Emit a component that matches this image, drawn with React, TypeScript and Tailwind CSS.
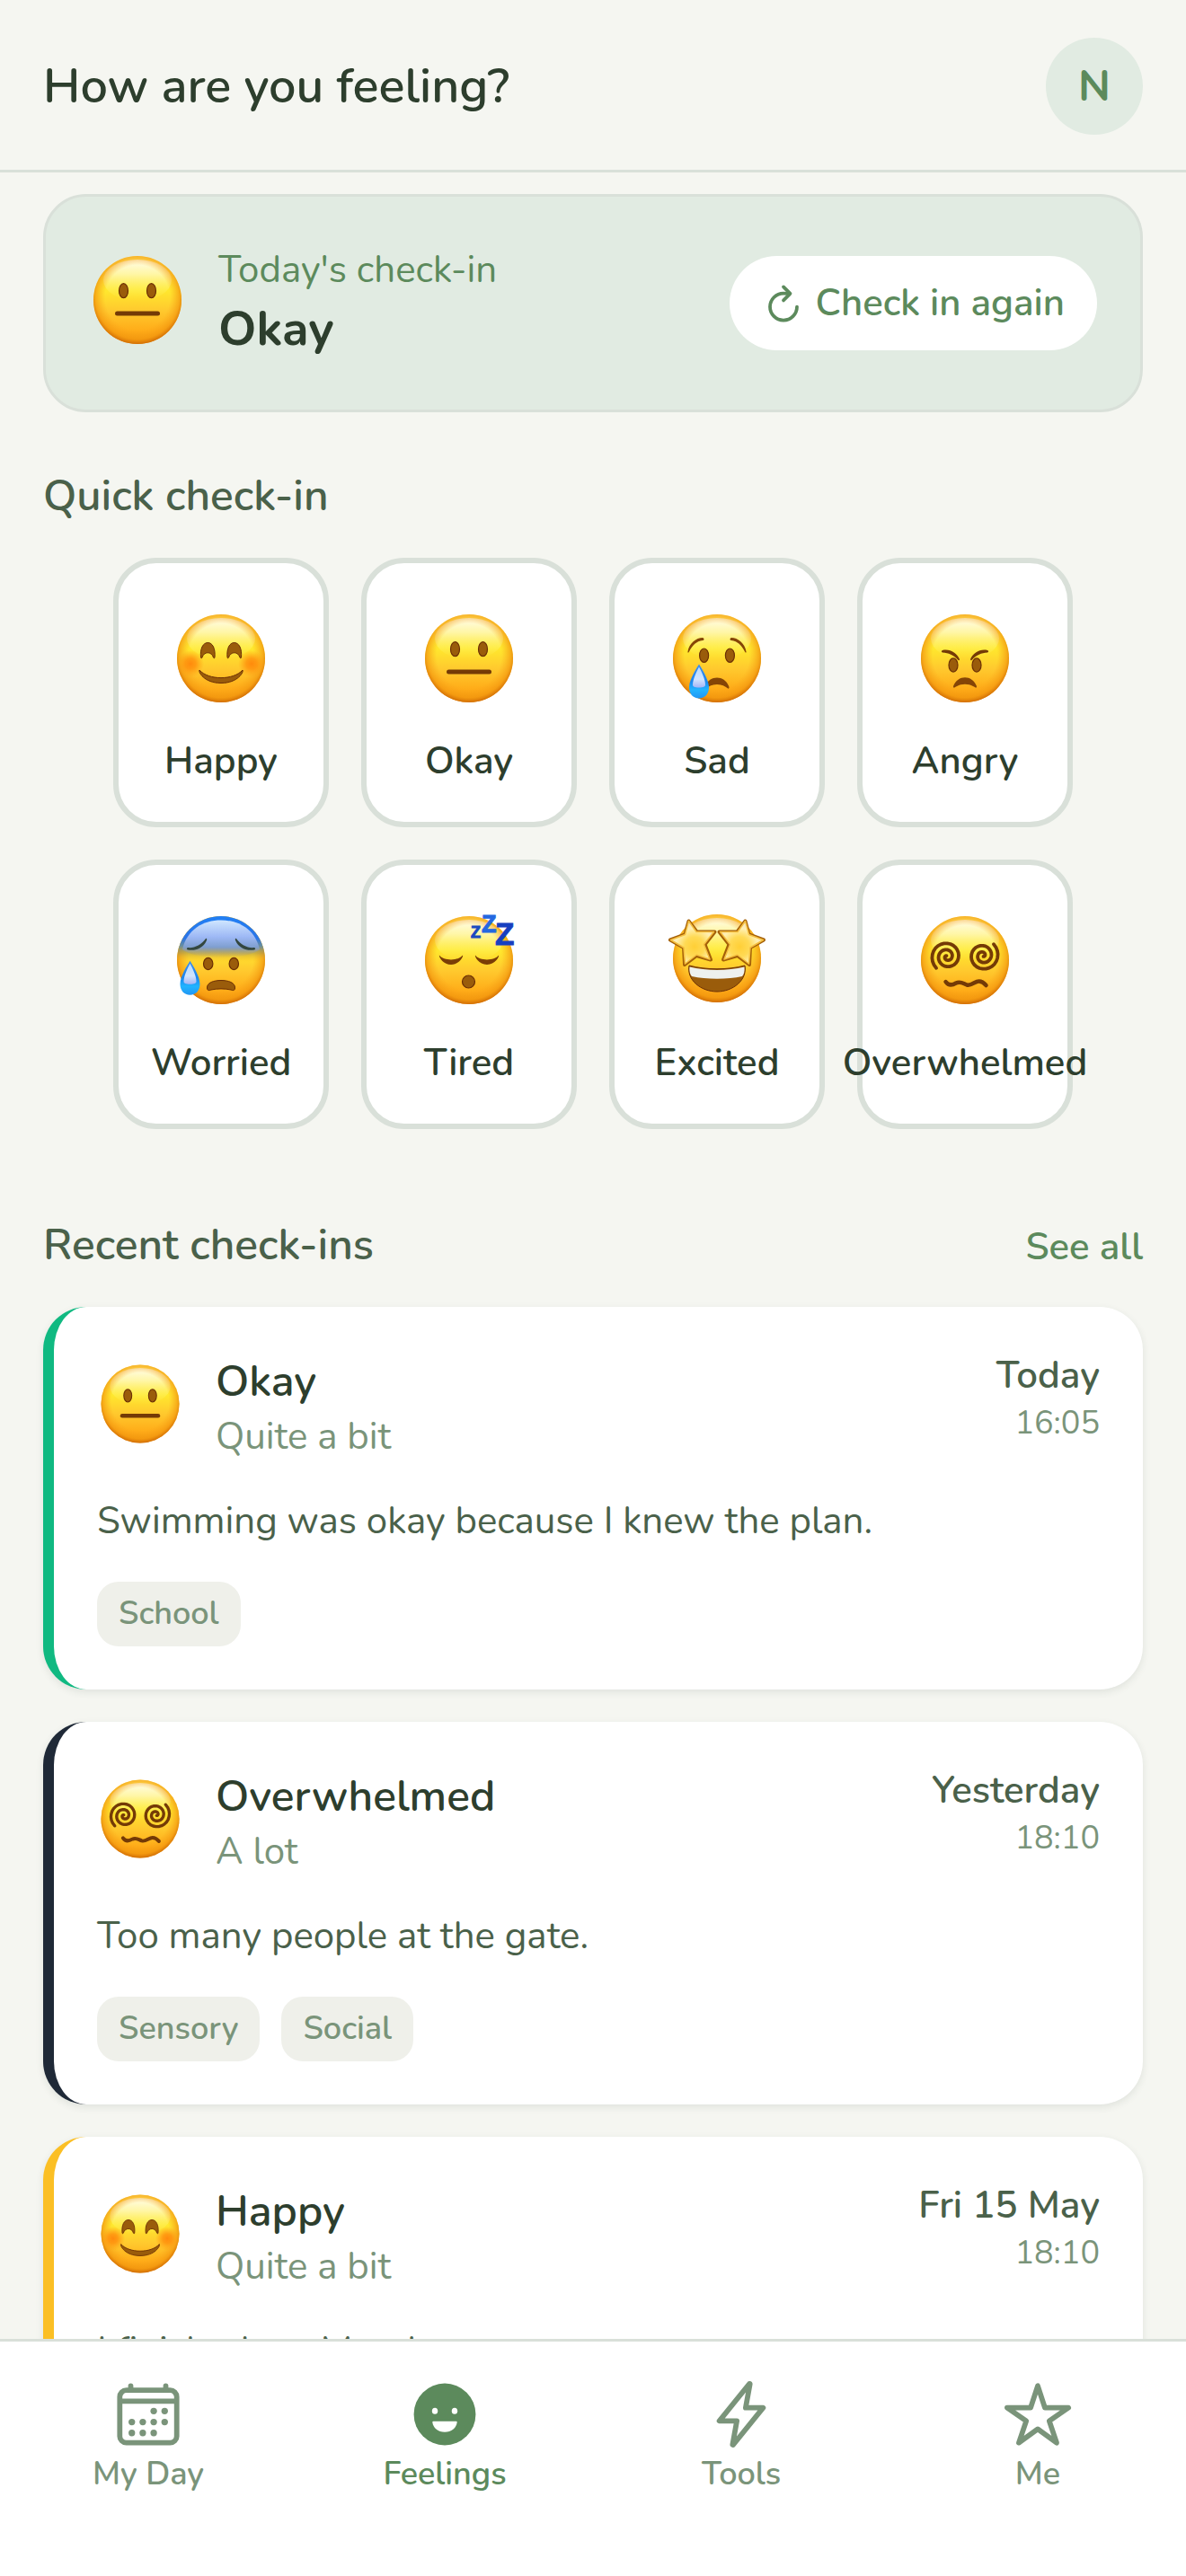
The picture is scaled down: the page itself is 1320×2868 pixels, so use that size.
import { IoCalendarOutline, IoFlashOutline, IoRefreshOutline, IoStarOutline } from "react-icons/io5";

type Mood = "happy" | "okay" | "sad" | "angry" | "worried" | "tired" | "excited" | "overwhelmed";

interface CheckIn {
  id: number;
  mood: Mood;
  label: string;
  intensity: string;
  day: string;
  time: string;
  note: string;
  tags: string[];
  accent: string;
}

const quickMoods: { mood: Mood; label: string }[] = [
  { mood: "happy", label: "Happy" },
  { mood: "okay", label: "Okay" },
  { mood: "sad", label: "Sad" },
  { mood: "angry", label: "Angry" },
  { mood: "worried", label: "Worried" },
  { mood: "tired", label: "Tired" },
  { mood: "excited", label: "Excited" },
  { mood: "overwhelmed", label: "Overwhelmed" },
];

const checkIns: CheckIn[] = [
  {
    id: 1,
    mood: "okay",
    label: "Okay",
    intensity: "Quite a bit",
    day: "Today",
    time: "16:05",
    note: "Swimming was okay because I knew the plan.",
    tags: ["School"],
    accent: "border-l-[#10b981]",
  },
  {
    id: 2,
    mood: "overwhelmed",
    label: "Overwhelmed",
    intensity: "A lot",
    day: "Yesterday",
    time: "18:10",
    note: "Too many people at the gate.",
    tags: ["Sensory", "Social"],
    accent: "border-l-[#1f2937]",
  },
  {
    id: 3,
    mood: "happy",
    label: "Happy",
    intensity: "Quite a bit",
    day: "Fri 15 May",
    time: "18:10",
    note: "I finished my Mural.",
    tags: ["School"],
    accent: "border-l-[#fbbf24]",
  },
];

const DARK = "#6b2f05";
const BROWN = "#9a5c0b";

// archimedean spiral from the centre out to the end angle, in degrees
function spiral(cx: number, cy: number, endAngle: number) {
  const turns = 2.3;
  const steps = 60;
  const points: string[] = [];
  for (let i = 0; i <= steps; i++) {
    const t = i / steps;
    const r = 1 + 16.5 * t;
    const a = ((endAngle + (1 - t) * turns * 360) * Math.PI) / 180;
    points.push(`${(cx + r * Math.cos(a)).toFixed(1)} ${(cy + r * Math.sin(a)).toFixed(1)}`);
  }
  return "M" + points.join("L");
}

const leftSpiral = spiral(-20, -4, 133);
const rightSpiral = spiral(20, -5, -47);

function FaceDefs() {
  return (
    <svg width="0" height="0" className="absolute" aria-hidden="true">
      <defs>
        <linearGradient id="skin" x1="0" y1="0" x2="0" y2="1">
          <stop offset="0" stopColor="#ffe45c" />
          <stop offset="0.38" stopColor="#ffe92e" />
          <stop offset="0.62" stopColor="#ffc92e" />
          <stop offset="0.85" stopColor="#ffac18" />
          <stop offset="1" stopColor="#f0930a" />
        </linearGradient>
        <radialGradient id="rim" cx="0.5" cy="0.47" r="0.54">
          <stop offset="0.68" stopColor="#f9a31a" stopOpacity="0" />
          <stop offset="0.88" stopColor="#f3980f" stopOpacity="0.7" />
          <stop offset="1" stopColor="#c96303" />
        </radialGradient>
        <linearGradient id="shine" x1="0" y1="0" x2="0" y2="1">
          <stop offset="0" stopColor="#fffdea" />
          <stop offset="0.35" stopColor="#fff9b8" stopOpacity="0.85" />
          <stop offset="1" stopColor="#fff04a" stopOpacity="0" />
        </linearGradient>
        <radialGradient id="blush">
          <stop offset="0" stopColor="#ff8a0c" />
          <stop offset="0.4" stopColor="#ff8f0c" stopOpacity="0.8" />
          <stop offset="1" stopColor="#ff9c12" stopOpacity="0" />
        </radialGradient>
        <linearGradient id="cold" x1="0" y1="0" x2="0" y2="1">
          <stop offset="0" stopColor="#2180f5" />
          <stop offset="0.25" stopColor="#2a74e8" />
          <stop offset="0.34" stopColor="#6b8f9c" />
          <stop offset="0.42" stopColor="#a8924c" stopOpacity="0.6" />
          <stop offset="0.52" stopColor="#ffae18" stopOpacity="0" />
        </linearGradient>
        <linearGradient id="coldShine" x1="0" y1="0" x2="0" y2="1">
          <stop offset="0" stopColor="#cfe6ff" />
          <stop offset="0.45" stopColor="#9db8f5" />
          <stop offset="0.72" stopColor="#7f9fd0" />
          <stop offset="1" stopColor="#c09c50" stopOpacity="0" />
        </linearGradient>
        <linearGradient id="tear" x1="0" y1="0" x2="0" y2="1">
          <stop offset="0" stopColor="#3b8df0" />
          <stop offset="0.5" stopColor="#1d86ee" />
          <stop offset="0.75" stopColor="#22b4ff" />
          <stop offset="1" stopColor="#2196f3" />
        </linearGradient>
        <linearGradient id="tearShine" x1="0" y1="0" x2="0" y2="1">
          <stop offset="0" stopColor="#b8dcff" />
          <stop offset="0.6" stopColor="#d0e4ff" />
          <stop offset="1" stopColor="#a4b4f5" />
        </linearGradient>
        <radialGradient id="starFill" cx="0.55" cy="0.6" r="0.58">
          <stop offset="0" stopColor="#ffcf36" />
          <stop offset="0.4" stopColor="#ffda55" />
          <stop offset="0.75" stopColor="#fff0b4" />
          <stop offset="1" stopColor="#f3e0c0" />
        </radialGradient>
      </defs>
    </svg>
  );
}

function Tear({ x, y }: { x: number; y: number }) {
  return (
    <g transform={`translate(${x} ${y})`}>
      <path d="M0 0C3 5 11 17 11 26C11 33 6.500 38 0 38C-6.500 38-11 33-11 26C-11 17-3 5 0 0Z" fill="url(#tear)" />
      <path d="M0 3C2 7 7 16 7 23C7 25 5 26 0 26C-5 26-7 25-7 23C-7 16-2 7 0 3Z" fill="url(#tearShine)" />
    </g>
  );
}

function Eyes({ x, y, rx, ry }: { x: number; y: number; rx: number; ry: number }) {
  return (
    <g fill={BROWN} stroke={DARK} strokeWidth="1.200">
      <ellipse cx={-x} cy={y} rx={rx - 0.6} ry={ry - 0.6} />
      <ellipse cx={x} cy={y} rx={rx - 0.6} ry={ry - 0.6} />
    </g>
  );
}

function Star() {
  return (
    <g strokeLinejoin="round">
      <path
        d="M-31.500-41.500L-22.500-29.500L-2.500-29.500L-13.500-15.500L-7 1.500L-22.700-3L-36 7L-37-12L-52-20.500L-35.500-26.500Z"
        fill="#a45f08"
        stroke="#a45f08"
        strokeWidth="4"
      />
      <path
        d="M-31.500-41.500L-23-29.500L-3.500-29.500L-14.500-15.500L-8 1L-22.700-4L-35.500 6L-37-12L-51.500-20.500L-35.500-26.500Z"
        fill="url(#starFill)"
        stroke="#f5c040"
        strokeWidth="1.500"
      />
    </g>
  );
}

function Features({ mood }: { mood: Mood }) {
  switch (mood) {
    case "happy":
      return (
        <>
          <circle cx="-34" cy="6" r="15" fill="url(#blush)" />
          <circle cx="34" cy="6" r="15" fill="url(#blush)" />
          <g fill={BROWN} stroke={DARK} strokeWidth="1">
            <path d="M-22.500-1C-23.500-11-20-17.500-14.700-17.500C-9.500-17.500-6-11-7-1C-7.300 0-8 0-8.500-1C-10.500-8-19-8-21-1C-21.500 0-22.200 0-22.500-1Z" />
            <path d="M22.500-1C23.500-11 20-17.500 14.700-17.500C9.500-17.500 6-11 7-1C7.300 0 8 0 8.500-1C10.500-8 19-8 21-1C21.500 0 22.200 0 22.500-1Z" />
            <path d="M-24 13C-14 24.500 14 24.500 24 13C25.500 15 19 27.500 0 27.500C-19 27.500-25.500 15-24 13Z" />
          </g>
        </>
      );
    case "okay":
      return (
        <>
          <Eyes x={15.5} y={-10.3} rx={5.6} ry={8.6} />
          <path d="M-22.500 15H22.500" stroke="#743a06" strokeWidth="5" strokeLinecap="round" />
        </>
      );
    case "sad":
      return (
        <>
          <Eyes x={14.4} y={-3.3} rx={5.6} ry={8.3} />
          <g fill="#854506">
            <path d="M-32.500-7.500C-31-17-23-23-16-23C-14-22.500-14-20-16-20C-23-19-27-15-31-7.500C-31.500-6-32.800-6-32.500-7.500Z" />
            <path d="M32.500-7.500C31-17 23-23 16-23C14-22.500 14-20 16-20C23-19 27-15 31-7.500C31.500-6 32.800-6 32.500-7.500Z" />
          </g>
          <path d="M-13.500 32C-9 18 9 18 13.500 32C13.500 34 12.500 34 11.500 33C4 27.500-4 27.500-11.500 33C-12.500 34-13.500 34-13.500 32Z" fill="#854506" />
          <Tear x={-20} y={6.5} />
        </>
      );
    case "angry":
      return (
        <>
          <Eyes x={13} y={7.5} rx={5.6} ry={8.2} />
          <g fill="#743a06">
            <path d="M-25-9C-17-11-9-6-6 1C-6 2.500-7 2.500-8 1.500C-13-4-18-6-25-6.500C-26.500-7-26.500-8.500-25-9Z" />
            <path d="M25-9C17-11 9-6 6 1C6 2.500 7 2.500 8 1.500C13-4 18-6 25-6.500C26.500-7 26.500-8.500 25-9Z" />
          </g>
          <path d="M-13 31C-8 18 8 18 13 31C13 33 12 33 11 32C4 27.500-4 27.500-11 32C-12 33-13 33-13 31Z" fill="#854506" />
        </>
      );
    case "worried":
      return (
        <>
          <circle r="49" fill="url(#cold)" />
          <path d="M-43-12C-38-34-20-44.500 0-44.500C20-44.500 38-34 43-12C30 0-30 0-43-12Z" fill="url(#coldShine)" />
          <g fill="#33473f">
            <path d="M-37-14C-30-13-22-17-17-24C-16-25-15.500-23.500-16-22C-20-13-29-10-37-11.500C-38.500-12-38.500-13.500-37-14Z" />
            <path d="M37-14C30-13 22-17 17-24C16-25 15.500-23.500 16-22C20-13 29-10 37-11.500C38.500-12 38.500-13.500 37-14Z" />
          </g>
          <Eyes x={14.3} y={4} rx={5.8} ry={7.2} />
          <path
            d="M-15.500 31C-16 25-8 22.500 0 22.500C8 22.500 16 25 15.500 31C15.500 34 13 34 11 33C4 31.500-4 31.500-11 33C-13 34-15.500 34-15.500 31Z"
            fill={BROWN}
            stroke={DARK}
            strokeWidth="1"
          />
          <Tear x={-34.5} y={0.7} />
        </>
      );
    case "tired":
      return (
        <>
          <g fill="#7a3d06">
            <path d="M-33-5.500C-28 1-12 1-7-5.500C-6-4-11 5-20 5C-29 5-34-4-33-5.500Z" />
            <path d="M33-5.500C28 1 12 1 7-5.500C6-4 11 5 20 5C29 5 34-4 33-5.500Z" />
          </g>
          <circle cx="-0.500" cy="24" r="7" fill={BROWN} stroke={DARK} strokeWidth="1.200" />
          <g fontFamily="Liberation Sans" fontWeight="700" strokeWidth="1">
            <text x="2" y="-25.500" fontSize="18" fill="#1b4ac0" stroke="#1b4ac0">Z</text>
            <text x="14" y="-31" fontSize="27" fill="#2468e0" stroke="#2468e0">Z</text>
            <text x="29" y="-17.500" fontSize="35" fill="#173fc0" stroke="#173fc0">Z</text>
          </g>
        </>
      );
    case "excited":
      return (
        <>
          <path d="M-31 8C-12 13 12 13 31 8C34 24 18 37 0 37C-18 37-34 24-31 8Z" fill={BROWN} stroke={DARK} strokeWidth="1" />
          <path d="M-30.500 9.500C-12 14 12 14 30.500 9.500C31 14 30 18 28 20C12 23.500-12 23.500-28 20C-30 18-31 14-30.500 9.500Z" fill="#eef1ee" />
          <Star />
          <g transform="scale(-1 1)">
            <Star />
          </g>
        </>
      );
    case "overwhelmed":
      return (
        <g fill="none" stroke="#743a06" strokeWidth="3.800" strokeLinecap="round" strokeLinejoin="round">
          <path d={leftSpiral} />
          <path d={rightSpiral} />
          <path d="M-21.500 24C-18 29-14 28-10 25.500C-5 23-2 26 2 27.500C7 29 11 23.500 15.500 23.500C19 23.500 21 25 23.500 28" strokeWidth="4.500" />
        </g>
      );
  }
}

function Face({ mood, className }: { mood: Mood; className: string }) {
  return (
    <svg viewBox="-54 -54 108 108" className={`shrink-0 overflow-visible ${className}`} aria-hidden="true">
      {/* the starry face sits slightly higher than the others */}
      <g transform={mood === "excited" ? "translate(0 -2)" : undefined}>
        <circle r="49" fill="url(#skin)" />
        <ellipse cy="-22" rx="38" ry="23" fill="url(#shine)" />
        <circle r="49" fill="url(#rim)" />
        <Features mood={mood} />
      </g>
    </svg>
  );
}

function HappyIcon({ className }: { className: string }) {
  return (
    <svg viewBox="0 0 512 512" className={className} aria-hidden="true">
      <circle cx="256" cy="256" r="226" fill="currentColor" />
      <ellipse cx="184" cy="232" rx="21" ry="23" fill="#fff" />
      <ellipse cx="328" cy="232" rx="21" ry="23" fill="#fff" />
      <path d="M172 307H340Q347 307 346 315C340 356 304 386 256 386C208 386 172 356 166 315Q165 307 172 307Z" fill="#fff" />
    </svg>
  );
}

const tabs = [
  { label: "My Day", Icon: IoCalendarOutline },
  { label: "Feelings", Icon: HappyIcon },
  { label: "Tools", Icon: IoFlashOutline },
  { label: "Me", Icon: IoStarOutline },
];

function CheckInCard({ item }: { item: CheckIn }) {
  return (
    <article className={`rounded-[48px] border-l-[12px] bg-white p-12 shadow-[0_3px_9px_rgba(44,62,45,0.1)] ${item.accent}`}>
      <div className="flex items-start justify-between">
        <div className="flex items-start gap-9">
          <Face mood={item.mood} className="mt-3 size-24" />
          <div className="pt-[2px]">
            <h3 className="text-[48px] leading-[66px] font-semibold text-[#2d3e2d]">{item.label}</h3>
            <p className="text-[42px] leading-[57px] text-[#7a947a]">{item.intensity}</p>
          </div>
        </div>
        <div className="text-right">
          <p className="text-[42px] leading-[57px] font-semibold text-[#4a614a]">{item.day}</p>
          <p className="text-[36px] leading-[49px] text-[#7a947a]">{item.time}</p>
        </div>
      </div>
      <p className="mt-[34px] text-[42px] leading-[63px] text-[#4a614a]">{item.note}</p>
      <ul className="mt-9 flex flex-wrap gap-6">
        {item.tags.map(tag => (
          <li key={tag} className="rounded-3xl bg-[#eff0ea] px-6 py-3 text-[36px] leading-[48px] font-semibold text-[#7a947a]">
            {tag}
          </li>
        ))}
      </ul>
    </article>
  );
}

export default function App() {
  return (
    <div className="flex h-screen flex-col bg-[#f5f6f1] font-['Nunito',Lato,sans-serif] text-[#2d3e2d]">
      <FaceDefs />
      <header className="flex shrink-0 items-center justify-between border-b-[3px] border-[#d9e0d9] px-12 pt-[42px] pb-[39px]">
        <h1 className="text-[54px] leading-[74px] font-semibold">How are you feeling?</h1>
        <button
          type="button"
          aria-label="Profile"
          className="flex size-[108px] items-center justify-center rounded-full bg-[#e1ebe2] text-[48px] leading-[66px] font-bold text-[#5c8a5c]"
        >
          N
        </button>
      </header>

      <main className="min-h-0 flex-1 overflow-y-auto px-12 pt-6 [scrollbar-width:none]">
        <section className="flex items-center justify-between rounded-[48px] border-[3px] border-[#d9e0d9] bg-[#e1ebe2] px-12 py-[53px]">
          <div className="flex items-start gap-9">
            <Face mood="okay" className="mt-2 size-[108px]" />
            <div>
              <p className="text-[42px] leading-[57px] text-[#5c8a5c]">Today's check-in</p>
              <p className="text-[54px] leading-[74px] font-bold">Okay</p>
            </div>
          </div>
          <button
            type="button"
            className="flex items-center gap-3 rounded-full bg-white px-9 py-6 text-[42px] leading-[57px] font-semibold text-[#5c8a5c]"
          >
            <IoRefreshOutline className="size-12 [&_[stroke-width]]:stroke-[40px]" />
            Check in again
          </button>
        </section>

        <section className="mt-[60px]">
          <h2 className="text-[48px] leading-[66px] font-semibold text-[#4a614a]">Quick check-in</h2>
          <div className="mt-9 flex flex-wrap justify-center gap-9 px-[60px]">
            {quickMoods.map(({ mood, label }) => (
              <button
                key={mood}
                type="button"
                className="flex w-60 flex-col items-center gap-8 rounded-[48px] border-[6px] border-[#d9e0d9] bg-white pt-[52px] pb-[39px] text-[42px] leading-[57px] font-semibold"
              >
                <Face mood={mood} className="size-[108px]" />
                {label}
              </button>
            ))}
          </div>
        </section>

        <section className="mt-24">
          <div className="flex items-baseline justify-between">
            <h2 className="text-[48px] leading-[66px] font-semibold text-[#4a614a]">Recent check-ins</h2>
            <a href="#all" className="text-[42px] leading-[57px] font-semibold text-[#5c8a5c]">
              See all
            </a>
          </div>
          <div className="mt-9 flex flex-col gap-9 pb-12">
            {checkIns.map(item => (
              <CheckInCard key={item.id} item={item} />
            ))}
          </div>
        </section>
      </main>

      <nav className="grid shrink-0 grid-cols-4 border-t-[3px] border-[#d9e0d9] bg-white pt-[42px] pb-[89px]">
        {tabs.map(({ label, Icon }) => (
          <a
            key={label}
            href="#tab"
            className={`flex flex-col items-center gap-[3px] text-[36px] leading-[49px] font-semibold ${
              label === "Feelings" ? "text-[#5c8a5c]" : "text-[#7a947a]"
            }`}
          >
            <Icon className="size-[78px] [&_[stroke-width]]:stroke-[38px]" />
            {label}
          </a>
        ))}
      </nav>
    </div>
  );
}
